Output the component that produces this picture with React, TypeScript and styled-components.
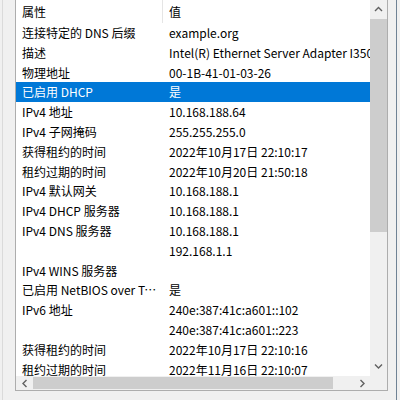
import React from 'react'
import styled, { createGlobalStyle } from 'styled-components'

const GlobalStyle = createGlobalStyle`
  html, body {
    margin: 0;
    padding: 0;
    background: #f0f0f0;
  }
  body {
    font-family: "Noto Sans CJK SC", "Noto Sans", sans-serif;
    font-size: 12px;
  }
`

interface DetailRow {
  name: string
  value: string
  selected?: boolean
}

const rows: DetailRow[] = [
  { name: '连接特定的 DNS 后缀', value: 'example.org' },
  { name: '描述', value: 'Intel(R) Ethernet Server Adapter I350' },
  { name: '物理地址', value: '00-1B-41-01-03-26' },
  { name: '已启用 DHCP', value: '是', selected: true },
  { name: 'IPv4 地址', value: '10.168.188.64' },
  { name: 'IPv4 子网掩码', value: '255.255.255.0' },
  { name: '获得租约的时间', value: '2022年10月17日 22:10:17' },
  { name: '租约过期的时间', value: '2022年10月20日 21:50:18' },
  { name: 'IPv4 默认网关', value: '10.168.188.1' },
  { name: 'IPv4 DHCP 服务器', value: '10.168.188.1' },
  { name: 'IPv4 DNS 服务器', value: '10.168.188.1' },
  { name: '', value: '192.168.1.1' },
  { name: 'IPv4 WINS 服务器', value: '' },
  { name: '已启用 NetBIOS over Tcpip', value: '是' },
  { name: 'IPv6 地址', value: '240e:387:41c:a601::102' },
  { name: '', value: '240e:387:41c:a601::223' },
  { name: '获得租约的时间', value: '2022年10月17日 22:10:16' },
  { name: '租约过期的时间', value: '2022年11月16日 22:10:07' },
]

const Window = styled.div`
  display: flex;
  width: 400px;
  height: 400px;
  overflow: hidden;
  background: #f0f0f0;
`

const LeftMargin = styled.div`
  width: 15px;
  flex: none;
  display: flex;
  padding-left: 2px;
  box-sizing: border-box;
`

const EdgeRule = styled.div<{ $color: string }>`
  width: 1px;
  align-self: stretch;
  background: ${(p) => p.$color};
`

const RightMargin = styled.div`
  flex: 1;
  display: flex;
  justify-content: flex-end;
`

const RightSide = styled.div`
  display: flex;
  width: 4px;
`

const ListFrame = styled.div`
  margin-top: -1px;
  width: 373px;
  height: 392px;
  flex: none;
  box-sizing: border-box;
  border: 1px solid #adadad;
  background: #fff;
  display: grid;
  grid-template-columns: 1fr 17px;
  grid-template-rows: 1fr 14px;
`

const Viewport = styled.div`
  overflow: hidden;
  display: flex;
  flex-direction: column;
`

const Header = styled.div`
  display: grid;
  grid-template-columns: 147px 1fr;
  height: 23px;
  flex: none;
  color: #000;
`

const HeaderCell = styled.div<{ $divider?: boolean }>`
  padding-left: 6px;
  line-height: 23px;
  white-space: nowrap;
  border-right: ${(p) => (p.$divider ? '1px solid #e5e5e5' : 'none')};
`

const Row = styled.div<{ $selected?: boolean }>`
  display: grid;
  grid-template-columns: 147px 1fr;
  height: 19.8px;
  flex: none;
  background: ${(p) => (p.$selected ? '#0078d7' : 'transparent')};
  color: ${(p) => (p.$selected ? '#fff' : '#000')};
`

const Cell = styled.div`
  padding-left: 6px;
  padding-right: 1px;
  line-height: 19.8px;
  white-space: nowrap;
  overflow: hidden;
  text-overflow: ellipsis;
`

const ValueCell = styled(Cell)`
  text-overflow: clip;
  padding-right: 0;
`

const VScroll = styled.div`
  background: #f0f0f0;
  display: flex;
  flex-direction: column;
`

const HScroll = styled.div`
  background: #f0f0f0;
  display: flex;
`

const ArrowButton = styled.div<{ $vertical?: boolean }>`
  flex: none;
  width: 17px;
  height: ${(p) => (p.$vertical ? '19px' : '14px')};
  display: flex;
  align-items: center;
  justify-content: center;
`

const VTrack = styled.div`
  flex: 1;
  display: flex;
  flex-direction: column;
`

const HTrack = styled.div`
  flex: 1;
  display: flex;
  align-items: stretch;
  padding: 1px 0;
`

const VThumb = styled.div`
  height: 213px;
  background: #cdcdcd;
`

const HThumb = styled.div`
  width: 300px;
  background: #cdcdcd;
`

const Corner = styled.div`
  background: #f0f0f0;
`

type Dir = 'up' | 'down' | 'left' | 'right'

// small chevrons for the scrollbar buttons
const chevron: Record<Dir, string> = {
  up: '1,5 4.5,1.5 8,5',
  down: '1,1.5 4.5,5 8,1.5',
  left: '5.5,1 2,4.5 5.5,8',
  right: '2.5,1 6,4.5 2.5,8',
}

const Arrow = ({ dir }: { dir: Dir }) => {
  const wide = dir === 'up' || dir === 'down'
  return (
    <svg width={wide ? 9 : 8} height={wide ? 7 : 9} viewBox={wide ? '0 0 9 7' : '0 0 8 9'}>
      <polyline points={chevron[dir]} fill="none" stroke="#606060" strokeWidth="1.4" />
    </svg>
  )
}

export default function App() {
  return (
    <>
      <GlobalStyle />
      <Window>
        <LeftMargin>
          <EdgeRule $color="#dadada" />
        </LeftMargin>
        <ListFrame>
          <Viewport>
            <Header>
              <HeaderCell $divider>属性</HeaderCell>
              <HeaderCell>值</HeaderCell>
            </Header>
            {rows.map((r, i) => (
              <Row key={i} $selected={r.selected}>
                <Cell>{r.name}</Cell>
                <ValueCell>{r.value}</ValueCell>
              </Row>
            ))}
          </Viewport>
          <VScroll>
            <ArrowButton $vertical>
              <Arrow dir="up" />
            </ArrowButton>
            <VTrack>
              <VThumb />
            </VTrack>
            <ArrowButton $vertical>
              <Arrow dir="down" />
            </ArrowButton>
          </VScroll>
          <HScroll>
            <ArrowButton>
              <Arrow dir="left" />
            </ArrowButton>
            <HTrack>
              <HThumb />
            </HTrack>
            <ArrowButton>
              <Arrow dir="right" />
            </ArrowButton>
          </HScroll>
          <Corner />
        </ListFrame>
        <RightMargin>
          <RightSide>
            <EdgeRule $color="#6f8294" />
          </RightSide>
        </RightMargin>
      </Window>
    </>
  )
}
